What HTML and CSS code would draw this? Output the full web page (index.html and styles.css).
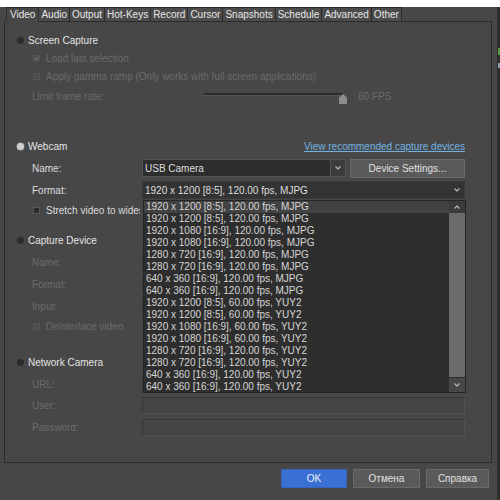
FILE: index.html
```html
<!DOCTYPE html>
<html>
<head>
<meta charset="utf-8">
<link rel="stylesheet" href="styles.css">
</head>
<body>
<div class="strip"></div>
<div class="dialog">
  <div class="tabs">
    <div class="tab active">Video</div>
    <div class="tab">Audio</div>
    <div class="tab">Output</div>
    <div class="tab">Hot-Keys</div>
    <div class="tab">Record</div>
    <div class="tab">Cursor</div>
    <div class="tab">Snapshots</div>
    <div class="tab">Schedule</div>
    <div class="tab">Advanced</div>
    <div class="tab">Other</div>
  </div>
  <div class="panel">
    <div class="row head r-sc"><span class="radio"></span><span>Screen Capture</span></div>
    <div class="row check dis"><span class="cb cb-dis"><svg width="7" height="7" viewBox="0 0 7 7"><polyline points="0.8,3.6 2.6,5.6 6.3,1" fill="none" stroke="#8a8a8a" stroke-width="1.2"/></svg></span><span>Load last selection</span></div>
    <div class="row check dis"><span class="cb cb-dis"></span><span>Apply gamma ramp (Only works with full screen applications)</span></div>
    <div class="row lbl dis r-limit">
      <span class="lab-wide">Limit frame rate:</span>
      <div class="slider"><div class="track"></div><div class="thumb"></div></div>
      <span class="fps">60 FPS</span>
    </div>

    <div class="row head r-webcam">
      <div class="headleft"><span class="radio on"></span><span>Webcam</span></div>
      <span class="link">View recommended capture devices</span>
    </div>
    <div class="row lbl r-gap4">
      <span class="lab">Name:</span>
      <div class="combo name">
        <span class="val">USB Camera</span>
        <span class="arrow"><svg width="6" height="4" viewBox="0 0 6 4"><polyline points="0.5,0.5 3,3 5.5,0.5" fill="none" stroke="#bdbdbd" stroke-width="1.1"/></svg></span>
      </div>
      <div class="btn dev">Device Settings...</div>
    </div>
    <div class="row lbl r-gap4">
      <span class="lab">Format:</span>
      <div class="combo format">
        <span class="val">1920 x 1200 [8:5], 120.00 fps, MJPG</span>
        <span class="arrow"><svg width="6" height="4" viewBox="0 0 6 4"><polyline points="0.5,0.5 3,3 5.5,0.5" fill="none" stroke="#bdbdbd" stroke-width="1.1"/></svg></span>
        <div class="dropdown">
          <div class="items">
            <div class="item sel">1920 x 1200 [8:5], 120.00 fps, MJPG</div>
            <div class="item">1920 x 1200 [8:5], 120.00 fps, MJPG</div>
            <div class="item">1920 x 1080 [16:9], 120.00 fps, MJPG</div>
            <div class="item">1920 x 1080 [16:9], 120.00 fps, MJPG</div>
            <div class="item">1280 x 720 [16:9], 120.00 fps, MJPG</div>
            <div class="item">1280 x 720 [16:9], 120.00 fps, MJPG</div>
            <div class="item">640 x 360 [16:9], 120.00 fps, MJPG</div>
            <div class="item">640 x 360 [16:9], 120.00 fps, MJPG</div>
            <div class="item">1920 x 1200 [8:5], 60.00 fps, YUY2</div>
            <div class="item">1920 x 1200 [8:5], 60.00 fps, YUY2</div>
            <div class="item">1920 x 1080 [16:9], 60.00 fps, YUY2</div>
            <div class="item">1920 x 1080 [16:9], 60.00 fps, YUY2</div>
            <div class="item">1280 x 720 [16:9], 120.00 fps, YUY2</div>
            <div class="item">1280 x 720 [16:9], 120.00 fps, YUY2</div>
            <div class="item">640 x 360 [16:9], 120.00 fps, YUY2</div>
            <div class="item">640 x 360 [16:9], 120.00 fps, YUY2</div>
          </div>
          <div class="scroll">
            <div class="sarrow up"><svg width="6" height="4" viewBox="0 0 6 4"><polyline points="0.5,3.5 3,1 5.5,3.5" fill="none" stroke="#bdbdbd" stroke-width="1.1"/></svg></div>
            <div class="sthumb"></div>
            <div class="sarrow down"><svg width="6" height="4" viewBox="0 0 6 4"><polyline points="0.5,0.5 3,3 5.5,0.5" fill="none" stroke="#bdbdbd" stroke-width="1.1"/></svg></div>
          </div>
        </div>
      </div>
    </div>
    <div class="row check r-gap2"><span class="cb"></span><span class="clip">Stretch video to widescreen</span></div>

    <div class="row head r-cap"><span class="radio"></span><span>Capture Device</span></div>
    <div class="row lbl dis r-gap4"><span class="lab">Name:</span><div class="field"></div></div>
    <div class="row lbl dis r-gap4"><span class="lab">Format:</span><div class="field"></div></div>
    <div class="row lbl dis r-gap4"><span class="lab">Input:</span><div class="field"></div></div>
    <div class="row check dis r-gap2"><span class="cb cb-dis"></span><span>Deinterlace video</span></div>

    <div class="row head r-net"><span class="radio"></span><span>Network Camera</span></div>
    <div class="row lbl dis r-gap4"><span class="lab">URL:</span><div class="field"></div></div>
    <div class="row lbl dis r-gap3"><span class="lab">User:</span><div class="field"></div></div>
    <div class="row lbl dis r-gap4"><span class="lab">Password:</span><div class="field"></div></div>
  </div>
  <div class="buttons">
    <div class="btn ok">OK</div>
    <div class="btn b2">Отмена</div>
    <div class="btn b3">Справка</div>
  </div>
</div>
<div class="edge"><div class="g"></div><div class="b"></div></div>
</body>
</html>
```
FILE: styles.css
```css
* { box-sizing: border-box; }
html, body { margin: 0; padding: 0; }
body {
  width: 500px;
  height: 500px;
  overflow: hidden;
  background: #474747;
  font-family: "Liberation Sans", Arial, sans-serif;
  font-size: 10px;
  color: #dcdcdc;
  position: relative;
}
.strip { height: 7px; background: #ffffff; }
.dialog { padding-left: 4px; display: flex; flex-direction: column; }

.tabs { display: flex; margin-left: 2px; height: 15px; margin-bottom: -1px; position: relative; z-index: 2; }
.tab {
  height: 15px;
  padding: 0 2px;
  line-height: 13px;
  background: #4b4b4b;
  border: 1px solid #2c2c2c;
  border-left: none;
  color: #e6e6e6;
  white-space: nowrap;
}
.tab:first-child { border-left: 1px solid #2c2c2c; }
.tab.active { background: #474747; border-bottom-color: #474747; padding: 0 3px; }

.panel {
  width: 488px;
  height: 442px;
  border: 1px solid #2b2b2b;
  display: flex;
  flex-direction: column;
}

.row { display: flex; align-items: center; height: 18px; flex: none; white-space: nowrap; }
.head { padding-left: 12px; color: #e4e4e4; }
.check { padding-left: 28px; }
.lbl { padding-left: 27px; }
.dis { color: #6b6b6b; }
.clip { width: 94px; overflow: hidden; }

.r-sc { margin-top: 9px; }
.r-limit { margin-top: 2px; }
.r-webcam { margin-top: 32px; justify-content: space-between; padding-right: 26px; }
.r-gap4 { margin-top: 4px; }
.r-gap3 { margin-top: 3px; }
.r-gap2 { margin-top: 2px; }
.r-cap { margin-top: 12px; }
.r-net { margin-top: 18px; }

.radio { width: 7px; height: 7px; border-radius: 50%; background: #2c2c2c; margin-right: 4px; flex: none; }
.radio.on { background: #cfcfcf; box-shadow: 0 0 0 0.5px #8a8a8a; }
.headleft { display: flex; align-items: center; }

.cb { width: 7px; height: 7px; background: #2b2b2b; border: 1px solid #5a5a5a; margin-right: 6px; flex: none; display: flex; align-items: center; justify-content: center; }
.cb-dis { background: #4e4e4e; border-color: #555555; }
.cb svg { display: block; }

.lab { width: 110px; flex: none; }
.lab-wide { width: 172px; flex: none; }

.slider { position: relative; width: 139px; height: 18px; flex: none; }
.track { position: absolute; left: 0; right: 0; top: 6px; height: 3px; background: #2a2a2a; border-bottom: 1px solid #555; }
.thumb {
  position: absolute; left: 135px; top: 7px; width: 8px; height: 10px;
  background: #8d8d8d;
  clip-path: polygon(50% 0, 100% 35%, 100% 100%, 0 100%, 0 35%);
}
.fps { margin-left: 15px; }

.link { color: #72b2e2; text-decoration: underline; }

.combo { display: flex; height: 18px; align-items: stretch; position: relative; flex: none; }
.combo .val { flex: 1; padding-left: 2px; display: flex; align-items: center; color: #dedede; }
.combo .arrow { width: 15px; display: flex; align-items: center; justify-content: center; }
.combo.name { width: 204px; background: #2d2d2d; border: 1px solid #535353; }
.combo.name .arrow { background: #3b3b3b; border-left: 1px solid #555; }
.combo.format { width: 323px; background: #333333; border: 1px solid #3a3a3a; }
.combo.format .arrow { width: 14px; }

.btn { display: flex; align-items: center; justify-content: center; height: 19px; border: 1px solid #6a6a6a; background: #5a5a5a; color: #e0e0e0; flex: none; }
.btn.dev { width: 115px; margin-left: 4px; }

.dropdown {
  position: absolute;
  left: 0;
  top: 18px;
  width: 323px;
  height: 193px;
  background: #2e2e2e;
  border: 1px solid #262626;
  display: flex;
  z-index: 5;
}
.items { flex: 1; }
.item { height: 12px; line-height: 12px; padding-left: 2px; color: #d6d6d6; }
.item.sel { background: #424242; }
.scroll { width: 16px; display: flex; flex-direction: column; background: #3a3a3a; }
.sarrow { display: flex; align-items: center; justify-content: center; }
.sarrow.up { height: 12px; background: #3a3a3a; }
.sarrow.down { height: 15px; background: #474747; border-top: 1px solid #2e2e2e; }
.sthumb { flex: 1; background: #6b6b6b; }

.field { width: 323px; height: 17px; background: #444444; border: 1px solid #383838; border-bottom-color: #525252; border-right-color: #525252; flex: none; }

.buttons { display: flex; justify-content: flex-end; gap: 6px; margin-top: 6px; padding-right: 11px; }
.btn.ok { width: 66px; background: #3a6fd3; border-color: #3563bd; color: #eef2fb; }
.btn.b2 { width: 67px; }
.btn.b3 { width: 63px; }

.edge { position: absolute; right: 0; top: 7px; width: 3px; height: 493px; background: #2d2d2d; }
.edge .g { position: absolute; left: 1px; top: 41px; width: 2px; height: 7px; background: #5b9a3c; }
.edge .b { position: absolute; left: 1px; top: 56px; width: 2px; height: 5px; background: #8aa0b4; }
```
